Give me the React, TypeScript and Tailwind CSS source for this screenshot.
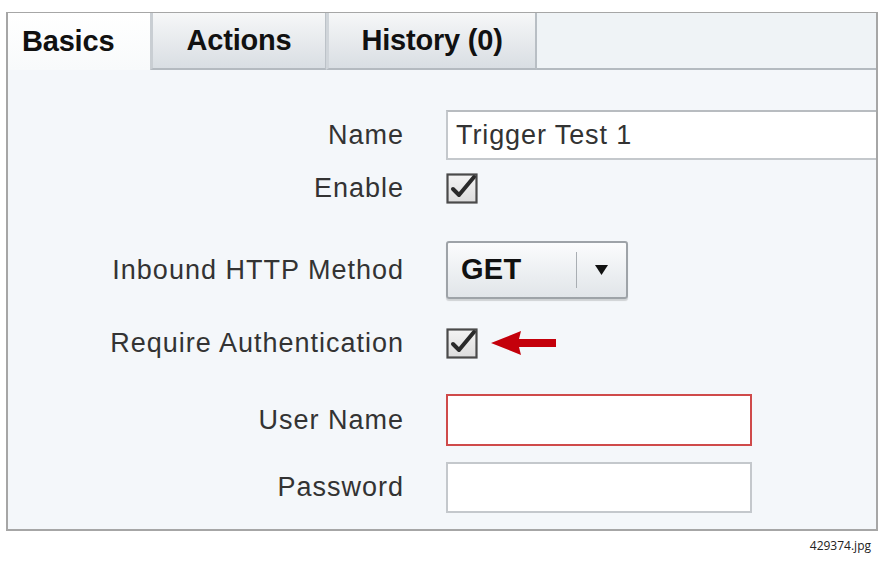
import React from 'react'

const font = { fontFamily: '"Liberation Sans", Arial, sans-serif' }

function CheckBox() {
  return (
    <svg width="34" height="34" viewBox="0 0 34 34">
      <defs>
        <linearGradient id="cbg" x1="0" y1="0" x2="0" y2="1">
          <stop offset="0" stopColor="#f4f4f4" />
          <stop offset="1" stopColor="#dcdcdc" />
        </linearGradient>
      </defs>
      <rect x="1.5" y="3.5" width="29" height="28" fill="url(#cbg)" stroke="#4a4a4a" strokeWidth="2.2" />
      <path d="M7 18 L13 24 L28 6" fill="none" stroke="#2a2a2a" strokeWidth="4" strokeLinecap="round" strokeLinejoin="round" />
    </svg>
  )
}

function RedArrow() {
  return (
    <svg width="68" height="26" viewBox="0 0 68 26" className="ml-[10px]">
      <path d="M1 13 L31 1 L29 9 L66 9 L66 17 L29 17 L31 25 Z" fill="#c4000b" />
    </svg>
  )
}

function Row({ label, top, height, children }: { label: string; top: number; height: number; children: React.ReactNode }) {
  return (
    <div className="flex items-center" style={{ marginTop: top, height }}>
      <div className="w-[396px] shrink-0 text-right text-[27px] tracking-[1px] text-[#333]">{label}</div>
      <div className="ml-[42px] flex items-center">{children}</div>
    </div>
  )
}

export default function App() {
  return (
    <div className="w-[893px] h-[562px] bg-white relative" style={font}>
      <div className="absolute left-[6px] top-[12px] w-[872px] h-[519px] border-2 border-t border-[#a6a6a6] bg-[#f4f7fa] overflow-hidden flex flex-col">
        {/* tab strip */}
        <div className="flex h-[57px] shrink-0 bg-[#f0f3f6]">
          <div className="w-[142px] h-[57px] bg-gradient-to-b from-white to-[#f8fafb] flex items-center pl-[14px] text-[29px] font-bold text-[#111] tracking-[-0.2px]">
            Basics
          </div>
          <div className="w-[176px] h-[57px] border-l-[3px] border-l-[#c9ced3] border-r border-r-[#bcc2c8] border-b-2 border-b-[#b4bac0] bg-gradient-to-b from-[#f6f7f8] to-[#d9dee3] flex items-center justify-center text-[29px] font-bold text-[#111] tracking-[-0.2px]">
            Actions
          </div>
          <div className="w-[211px] h-[57px] border-l-[3px] border-l-[#d0d5da] border-r-2 border-r-[#b8bec4] border-b-2 border-b-[#b4bac0] bg-gradient-to-b from-[#f6f7f8] to-[#d9dee3] flex items-center justify-center text-[29px] font-bold text-[#111] tracking-[-0.2px]">
            History (0)
          </div>
          <div className="flex-1 h-[57px] border-b-2 border-b-[#b4bac0] bg-[#eff3f6]" />
        </div>

        {/* form */}
        <div className="flex flex-col">
          <Row label="Name" top={40} height={50}>
            <div className="w-[460px] h-[50px] bg-white border-2 border-[#c4c8cc] border-t-[#b8bcc0] flex items-center pl-[8px] text-[27px] tracking-[0.9px] text-[#333]">
              Trigger Test 1
            </div>
          </Row>
          <Row label="Enable" top={8} height={40}>
            <CheckBox />
          </Row>
          <Row label="Inbound HTTP Method" top={33} height={58}>
            <div className="w-[182px] h-[58px] rounded-[3px] border-2 border-[#9ea3a8] bg-gradient-to-b from-[#fbfcfd] to-[#e1e5e9] shadow-[0_2px_1px_rgba(0,0,0,0.15)] flex items-center">
              <div className="w-[128px] pl-[13px] text-[29px] font-bold text-[#111] tracking-[0.3px]">GET</div>
              <div className="w-px h-[36px] bg-[#a9aeb3]" />
              <div className="flex-1 flex justify-center">
                <svg width="13" height="10" viewBox="0 0 13 10">
                  <path d="M0 0 L13 0 L6.5 10 Z" fill="#111" />
                </svg>
              </div>
            </div>
          </Row>
          <Row label="Require Authentication" top={27} height={34}>
            <CheckBox />
            <RedArrow />
          </Row>
          <Row label="User Name" top={34} height={52}>
            <div className="w-[306px] h-[52px] bg-white border-2 border-[#cf4a4a]" />
          </Row>
          <Row label="Password" top={16} height={51}>
            <div className="w-[306px] h-[51px] bg-white border-2 border-[#c4c8cc]" />
          </Row>
        </div>
      </div>
      <div className="absolute right-[22px] top-[537px] text-[12px] text-[#222]" style={{ fontFamily: '"Open Sans", "Liberation Sans", sans-serif' }}>
        429374.jpg
      </div>
    </div>
  )
}
